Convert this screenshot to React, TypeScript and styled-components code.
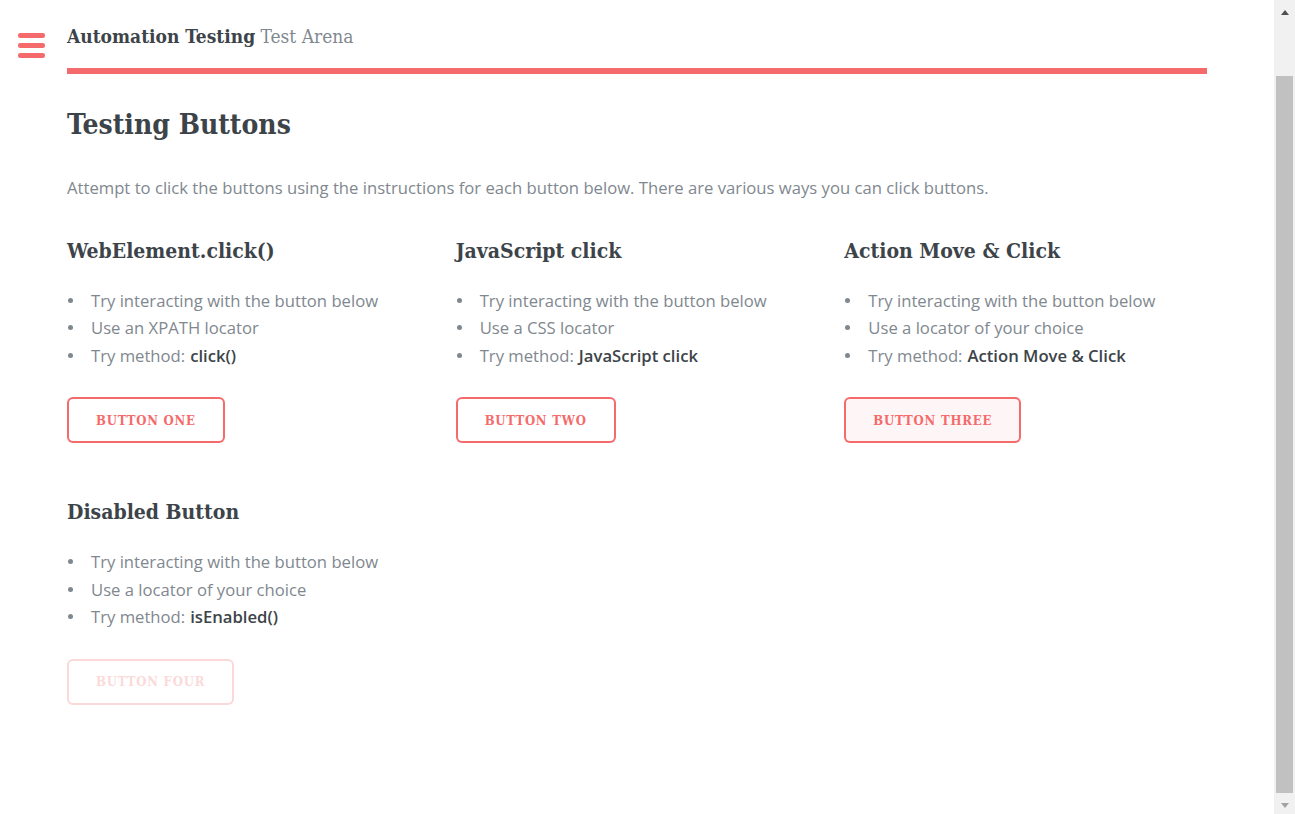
import React from 'react'
import styled, { createGlobalStyle, css } from 'styled-components'

const accent = '#f56a6a'
const heading = '#3d4449'
const text = '#7f888f'
const slab = `'Roboto Slab', 'DejaVu Serif Condensed', 'DejaVu Serif', serif`

const GlobalStyle = createGlobalStyle`
  body {
    margin: 0;
    background: #fff;
    color: ${text};
    font-family: 'Open Sans', sans-serif;
    font-size: 16.67px;
    line-height: 1.65;
  }
`

const Shell = styled.div`
  display: flex;
  height: 100vh;
  overflow: hidden;
`

const Content = styled.div`
  flex: 1;
  min-width: 0;
`

// window scrollbar, page scrolled a little way down
const Rail = styled.div`
  display: flex;
  flex-direction: column;
  flex: none;
  width: 21px;
  background: #f1f1f1;
`

const RailArrow = styled.div<{ $down?: boolean }>`
  display: flex;
  align-items: center;
  justify-content: center;
  flex: none;
  height: ${({ $down }) => ($down ? '21px' : '17px')};

  &::before {
    content: '';
    width: 0;
    height: 0;
    border-left: 4.5px solid transparent;
    border-right: 4.5px solid transparent;
    ${({ $down }) =>
      $down
        ? css`
            margin-top: 3px;
            border-top: 5px solid #a3a3a3;
          `
        : css`
            margin-top: 7px;
            border-bottom: 5px solid #505050;
          `}
  }
`

const RailTrack = styled.div`
  display: flex;
  flex: 1;
  padding: 59px 2px 0;
`

const RailThumb = styled.div`
  flex: 1;
  background: #c1c1c1;
`

const Container = styled.div`
  width: 1140px;
  margin: 0 auto;
`

const Header = styled.header`
  position: relative;
  padding: 21px 0 17px;
  border-bottom: 6px solid ${accent};
`

const Toggle = styled.button`
  position: absolute;
  top: 33px;
  left: -49px;
  display: block;
  width: 27px;
  height: 25px;
  padding: 0;
  border: 0;
  background: transparent;
  cursor: pointer;
`

const Logo = styled.a`
  font-family: ${slab};
  font-size: 19px;
  line-height: 30px;
  color: ${text};
  text-decoration: none;

  strong {
    font-weight: 700;
    color: ${heading};
  }
`

const Title = styled.h1`
  margin: 28px 0 0;
  font-family: ${slab};
  font-size: 28px;
  font-weight: 700;
  line-height: 45px;
  color: ${heading};
`

const Intro = styled.p`
  margin: 27px 0 0;
`

const Grid = styled.div`
  display: grid;
  grid-template-columns: repeat(3, 1fr);
  column-gap: 26px;
  row-gap: 52px;
  margin-top: 32px;
`

const Card = styled.section`
  display: flex;
  flex-direction: column;
  align-items: flex-start;
`

const CardTitle = styled.h3`
  margin: 0;
  font-family: ${slab};
  font-size: 21px;
  font-weight: 700;
  line-height: 33px;
  color: ${heading};
`

const Steps = styled.ul`
  margin: 20px 0 0;
  padding: 0;
  list-style: none;
`

const Step = styled.li`
  display: flex;
  align-items: center;

  &::before {
    content: '';
    flex: none;
    width: 5px;
    height: 5px;
    margin: 0 18px 0 1px;
    border-radius: 50%;
    background: ${text};
  }

  strong {
    margin-left: 0.3em;
    font-weight: 600;
    color: ${heading};
  }
`

const Button = styled.button<{ $hover?: boolean }>`
  display: inline-flex;
  align-items: center;
  justify-content: center;
  height: 46px;
  margin-top: 28px;
  padding: 0 29px;
  border: 0;
  border-radius: 6px;
  box-shadow: inset 0 0 0 2px ${accent};
  background: transparent;
  font-family: ${slab};
  font-size: 13px;
  font-weight: 700;
  letter-spacing: 0.8px;
  text-transform: uppercase;
  color: ${accent};
  cursor: pointer;

  ${({ $hover }) =>
    $hover &&
    css`
      background: rgba(245, 106, 106, 0.06);
    `}

  &:disabled {
    opacity: 0.25;
    cursor: default;
  }
`

const MenuIcon = () => (
  <svg width="27" height="25" viewBox="0 0 27 25" fill={accent}>
    <rect x="0" y="0" width="27" height="5" rx="2.2" />
    <rect x="0" y="10" width="27" height="5" rx="2.2" />
    <rect x="0" y="20" width="27" height="5" rx="2.2" />
  </svg>
)

type Block = {
  title: string
  locator: string
  method: string
  label: string
  hover?: boolean
  disabled?: boolean
}

const blocks: Block[] = [
  {
    title: 'WebElement.click()',
    locator: 'Use an XPATH locator',
    method: 'click()',
    label: 'Button One',
  },
  {
    title: 'JavaScript click',
    locator: 'Use a CSS locator',
    method: 'JavaScript click',
    label: 'Button Two',
  },
  {
    title: 'Action Move & Click',
    locator: 'Use a locator of your choice',
    method: 'Action Move & Click',
    label: 'Button Three',
    hover: true,
  },
  {
    title: 'Disabled Button',
    locator: 'Use a locator of your choice',
    method: 'isEnabled()',
    label: 'Button Four',
    disabled: true,
  },
]

export default function App() {
  return (
    <>
      <GlobalStyle />
      <Shell>
        <Content>
          <Container>
            <Header>
              <Toggle aria-label="toggle sidebar">
                <MenuIcon />
              </Toggle>
              <Logo href="#">
                <strong>Automation Testing</strong> Test Arena
              </Logo>
            </Header>
            <main>
              <Title>Testing Buttons</Title>
              <Intro>
                Attempt to click the buttons using the instructions for each
                button below. There are various ways you can click buttons.
              </Intro>
              <Grid>
                {blocks.map((b) => (
                  <Card key={b.title}>
                    <CardTitle>{b.title}</CardTitle>
                    <Steps>
                      <Step>Try interacting with the button below</Step>
                      <Step>{b.locator}</Step>
                      <Step>
                        Try method: <strong>{b.method}</strong>
                      </Step>
                    </Steps>
                    <Button $hover={b.hover} disabled={b.disabled}>
                      {b.label}
                    </Button>
                  </Card>
                ))}
              </Grid>
            </main>
          </Container>
        </Content>
        <Rail aria-hidden="true">
          <RailArrow />
          <RailTrack>
            <RailThumb />
          </RailTrack>
          <RailArrow $down />
        </Rail>
      </Shell>
    </>
  )
}
